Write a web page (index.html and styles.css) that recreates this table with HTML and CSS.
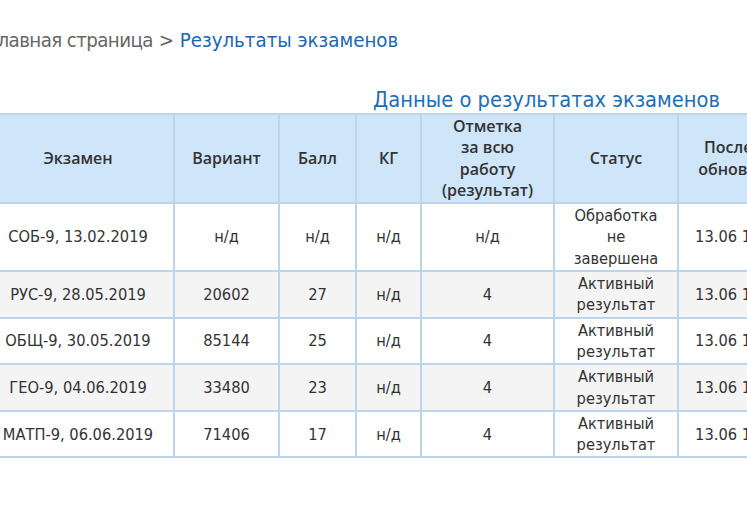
FILE: index.html
```html
<!DOCTYPE html>
<html lang="ru">
<head>
<meta charset="utf-8">
<link rel="stylesheet" href="styles.css">
</head>
<body>
<div class="page">
  <div class="crumbs"><span class="crumb-home">Главная страница</span> <span class="sep">&gt;</span> <span class="crumb-current">Результаты экзаменов</span></div>
  <h2 class="title">Данные о результатах экзаменов</h2>
  <table class="results">
    <colgroup>
      <col class="c-exam"><col class="c-var"><col class="c-score"><col class="c-kg"><col class="c-mark"><col class="c-status"><col class="c-upd">
    </colgroup>
    <thead>
      <tr>
        <th>Экзамен</th>
        <th>Вариант</th>
        <th>Балл</th>
        <th>КГ</th>
        <th>Отметка<br>за всю<br>работу<br>(результат)</th>
        <th>Статус</th>
        <th>Последнее<br>обновление</th>
      </tr>
    </thead>
    <tbody>
      <tr>
        <td>СОБ-9, 13.02.2019</td><td>н/д</td><td>н/д</td><td>н/д</td><td>н/д</td><td>Обработка<br>не<br>завершена</td><td class="upd">13.06 14:05</td>
      </tr>
      <tr>
        <td>РУС-9, 28.05.2019</td><td>20602</td><td>27</td><td>н/д</td><td>4</td><td>Активный<br>результат</td><td class="upd">13.06 14:05</td>
      </tr>
      <tr>
        <td>ОБЩ-9, 30.05.2019</td><td>85144</td><td>25</td><td>н/д</td><td>4</td><td>Активный<br>результат</td><td class="upd">13.06 14:05</td>
      </tr>
      <tr>
        <td>ГЕО-9, 04.06.2019</td><td>33480</td><td>23</td><td>н/д</td><td>4</td><td>Активный<br>результат</td><td class="upd">13.06 14:05</td>
      </tr>
      <tr>
        <td>МАТП-9, 06.06.2019</td><td>71406</td><td>17</td><td>н/д</td><td>4</td><td>Активный<br>результат</td><td class="upd">13.06 14:05</td>
      </tr>
    </tbody>
  </table>
</div>
</body>
</html>
```
FILE: styles.css
```css
html, body {
  margin: 0;
  padding: 0;
  background: #fff;
  overflow: hidden;
}
body {
  font-family: "DejaVu Sans Condensed", "DejaVu Sans", Verdana, sans-serif;
  color: #333;
}
.page {
  margin-left: -19px;
  width: 860px;
  padding-top: 26px;
}
.crumbs {
  font-size: 20.3px;
  line-height: 28px;
  text-indent: 6px;
  color: #666;
  white-space: nowrap;
}
.crumb-home {
  letter-spacing: -0.6px;
}
.crumb-current {
  color: #1c67b0;
}
.title {
  margin: 33px 0 0 0;
  font-weight: normal;
  font-size: 21.7px;
  line-height: 26px;
  color: #1c6fb8;
  text-align: right;
  padding-right: 121px;
  white-space: nowrap;
}
.results {
  border-collapse: collapse;
  table-layout: fixed;
  width: 835px;
  font-size: 16.3px;
  line-height: 21.3px;
  color: #333;
}
.c-exam { width: 192px; }
.c-var { width: 105px; }
.c-score { width: 77px; }
.c-kg { width: 65px; }
.c-mark { width: 133px; }
.c-status { width: 124px; }
.c-upd { width: 139px; }
.results th,
.results td {
  border: 2px solid #bcd5ec;
  text-align: center;
  vertical-align: middle;
  padding: 1px 4px;
  white-space: nowrap;
  overflow: hidden;
}
.results td.upd {
  padding-right: 20px;
}
.results th {
  background: #cfe5f9;
  font-family: "Open Sans", sans-serif;
  font-weight: 600;
  font-size: 16px;
  color: #333;
}
.results tbody tr:nth-child(even) td {
  background: #f4f4f4;
}
```
